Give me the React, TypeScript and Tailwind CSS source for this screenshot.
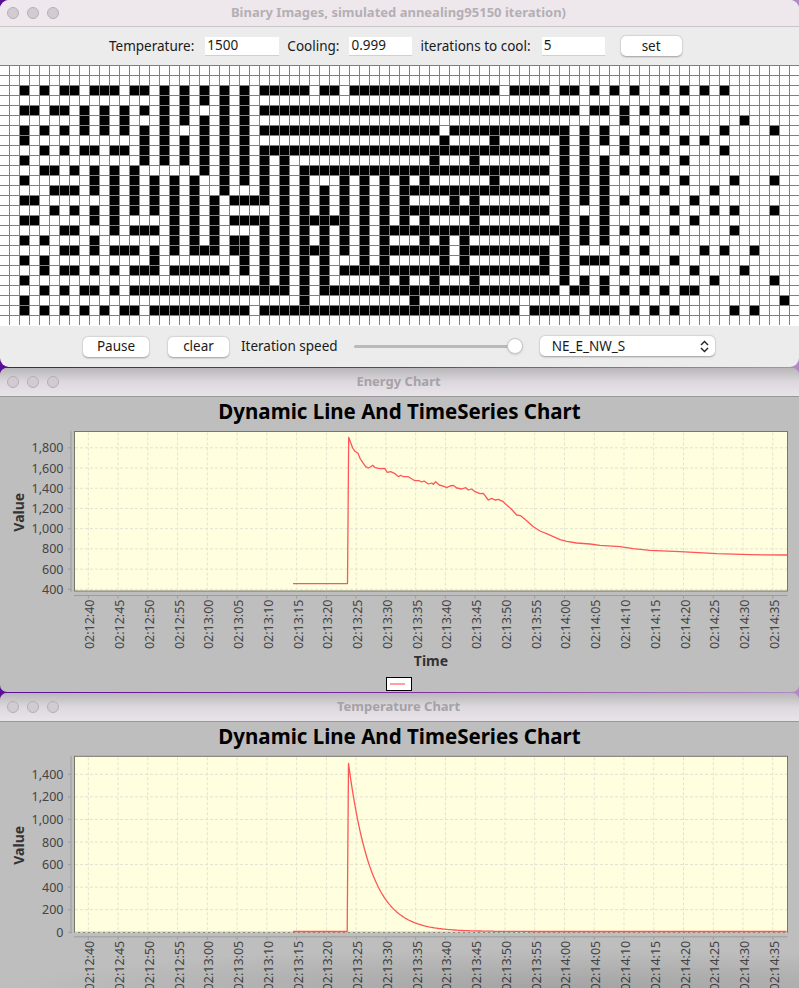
import React from 'react';

const SANS = "font-['Noto_Sans','Open_Sans',sans-serif]";

// black cells per row of the board, as [from, to] column runs or single columns
const BOARD: Record<number, (number | [number, number])[]> = {
  2: [2, 4, [6, 7], [9, 11], [13, 14], 16, 18, 20, 22, 24, [26, 30], [32, 33], [35, 49], [51, 54], [56, 57], 59, 61, 63, 66, 68, 70, 72],
  3: [16, 18, 20, 22, 24],
  4: [[2, 3], [5, 6], 8, 10, 12, 14, 16, 18, 22, 24, [26, 57], [59, 60], 62, 64, 66, 68],
  5: [8, 10, 12, 16, 18, 20, 22, 24, 62, 74],
  6: [2, 4, 6, 8, 10, 12, 14, 16, 20, 22, 24, [26, 43], [45, 56], 58, 60, 64, 66, 72, 77],
  7: [2, 14, 16, 18, 20, 22, 24, 44, 49, 56, 58, 60, 62, 68, 70],
  8: [4, 6, [8, 9], [11, 12], 14, 16, 18, 20, 22, 24, [26, 54], 56, 58, 62, 64, 66, 72],
  9: [2, 14, 16, 18, 20, 22, 24, 26, 28, 43, 47, 56, 58, 60, 68],
  10: [[4, 5], 7, 9, 11, 13, 20, 22, 24, 26, 28, [30, 54], 56, 58, 60, 62, 64, 66],
  11: [2, 9, 11, 13, 15, 17, 19, 22, 24, 26, 28, 30, 34, 36, 38, 40, 42, 49, 56, 58, 60, 68, 73, 77],
  12: [[5, 7], 9, 11, 13, 15, 17, 19, 22, 26, 28, 30, 32, 34, 36, 38, [40, 54], 56, 58, 60, 64, 66, 71],
  13: [[2, 3], 11, 13, 15, 17, 19, 21, [23, 26], 28, 30, 32, 34, 36, 38, 40, 45, 47, 56, 58, 60, 62, 69],
  14: [5, 7, 9, 11, 13, 15, 17, 19, 21, 28, 30, 32, 34, 36, 38, [40, 54], 56, 60, 64, 67, 71, 73, 77],
  15: [[2, 3], 9, 11, 17, 19, 21, [23, 26], 28, [30, 34], 36, 38, 40, 42, 47, 56, 58, 60, 69],
  16: [[6, 7], 11, [13, 15], 17, 19, 21, 26, 28, 30, 32, 34, 36, [38, 56], 58, 60, 62, 64, 67, 73],
  17: [2, 4, 9, 17, 19, 21, [23, 24], 26, 28, 30, 32, 34, 36, 38, 42, 44, 46, 56, 58, 60],
  18: [[6, 7], 9, [11, 13], 15, 17, [19, 21], [23, 24], 26, 28, [30, 32], 34, 36, [38, 44], [46, 54], 56, 62, 64, 70, 72, 75],
  19: [2, 4, 15, 24, 26, 28, 30, 32, 36, 38, 44, 46, 54, 56, [58, 60], 67],
  20: [4, [6, 7], 9, 11, [13, 15], [17, 22], 24, 26, 28, 30, 32, [34, 54], 56, 62, [64, 65], 69, 74],
  21: [2, 26, 28, 30, 32, 38, 40, 43, 47, 56, 58, 60, 71, 77],
  22: [4, 6, [8, 9], 11, [13, 28], 30, [32, 55], [57, 58], 60, 62, 64, 66, [68, 69]],
  23: [2, 30, 41, 78],
  24: [2, 4, 6, 8, 10, [12, 13], [15, 24], [26, 51], [53, 57], [59, 61], 63, 65, 67, 73, 75],
};

const isBlack = (r: number, c: number) =>
  (BOARD[r] || []).some((e) => (Array.isArray(e) ? c >= e[0] && c <= e[1] : c === e));

const Board: React.FC = () => (
  <div className="h-[261px] overflow-hidden bg-white">
    <div className="grid -ml-px w-[801px] grid-cols-[repeat(80,10px)] auto-rows-[10px]">
      {Array.from({ length: 2080 }, (_, i) => {
        const r = Math.floor(i / 80);
        const c = i % 80;
        return (
          <div
            key={i}
            className={isBlack(r, c) ? 'bg-black border-t border-l border-[#808080]' : 'bg-white border-t border-l border-[#808080]'}
          />
        );
      })}
    </div>
  </div>
);

const TitleBar: React.FC<{ title: string; active?: boolean }> = ({ title, active }) => (
  <div
    className={
      active
        ? 'flex h-[27px] items-center border-b border-[#c9c6c9] bg-[#eee8ed] pl-[7px]'
        : 'flex h-[29px] items-center border-b border-[#9a989a] bg-gradient-to-b from-[#b9b7b9] via-[#dcd8dd] to-[#e8e4ea] pl-[7px]'
    }
  >
    <div className="flex gap-[8px]">
      <span className="h-3 w-3 rounded-full border border-[#b5afb5] bg-[#d2ccd2]" />
      <span className="h-3 w-3 rounded-full border border-[#b5afb5] bg-[#d2ccd2]" />
      <span className="h-3 w-3 rounded-full border border-[#b5afb5] bg-[#d2ccd2]" />
    </div>
    <div className={`flex-1 pr-[61px] text-center text-[13px] font-bold ${active ? 'text-[#b4afb4]' : 'text-[#a5a2a6]'} ${SANS}`}>
      {title}
    </div>
  </div>
);

const MacButton: React.FC<{ label: string; className: string }> = ({ label, className }) => (
  <button className={`flex h-5 items-center justify-center rounded-[5px] bg-white text-[13.5px] text-[#1a1a1a] shadow-[0_0.5px_2px_rgba(0,0,0,0.35)] ${className}`}>
    {label}
  </button>
);

const Field: React.FC<{ value: string; className: string }> = ({ value, className }) => (
  <div className={`flex h-[19px] items-center border-b border-[#d0d0d0] bg-white pl-[2px] text-[13.5px] text-[#1a1a1a] ${className}`}>
    {value}
  </div>
);

const TICK_LABELS = Array.from({ length: 24 }, (_, i) => {
  const total = 12 * 60 + 40 + i * 5;
  const m = String(Math.floor(total / 60)).padStart(2, '0');
  const s = String(total % 60).padStart(2, '0');
  return `02:${m}:${s}`;
});

const PLOT = { left: 74.5, right: 787.5 };
const tickX = (i: number) => 88.3 + i * 29.76;

// energy trace, read off the reference crop at 3x
const ENERGY_RAW: [number, number][] = [
  [146, 52], [152, 68], [158, 84], [165, 94], [174, 100], [180, 115], [188, 127], [197, 140], [205, 144], [212, 140],
  [218, 136], [225, 143], [240, 146], [254, 145], [262, 157], [272, 155], [285, 161], [296, 170], [302, 166], [310, 170],
  [325, 170], [345, 182], [358, 182], [365, 186], [372, 183], [385, 192], [395, 189], [400, 193], [407, 185], [418, 195],
  [432, 199], [440, 203], [450, 198], [460, 196], [470, 204], [485, 207], [497, 203], [505, 210], [515, 207], [525, 215],
  [540, 221], [550, 220], [565, 240], [575, 235], [585, 240], [595, 238], [608, 244], [620, 255], [633, 266], [650, 285],
  [662, 287], [680, 302], [700, 320], [720, 333], [745, 343], [780, 359], [800, 364], [830, 369], [870, 372], [900, 376],
  [960, 380], [1000, 386], [1050, 391], [1140, 395], [1250, 401], [1350, 404], [1462, 405],
];
const energyPoints =
  '293,156.6 347.5,156.6 ' + ENERGY_RAW.map(([x, y]) => `${(300 + x / 3).toFixed(1)},${(420 + y / 3 - 427).toFixed(1)}`).join(' ');

const tempPoints = (bottom: number) => {
  const base = bottom - 0.8;
  const pts = [`293,${base}`, `347.2,${base}`];
  for (let x = 348.5; x <= 787; x += 2) {
    const t = 1490 * Math.exp(-(x - 348.5) / 22.4);
    pts.push(`${x},${(base - t * 0.1128).toFixed(1)}`);
  }
  return pts.join(' ');
};

interface ChartProps {
  height: number;
  plotTop: number;
  plotBottom: number;
  ticks: { label: string; y: number }[];
  points: string;
  showFooter?: boolean;
}

const Chart: React.FC<ChartProps> = ({ height, plotTop, plotBottom, ticks, points, showFooter }) => (
  <svg width={799} height={height} className="block" fontFamily="'Noto Sans', sans-serif">
    <line x1={71} x2={71} y1={plotTop} y2={plotBottom + 1} stroke="#9c9c9c" />
    <line x1={74} x2={PLOT.right} y1={plotBottom + 4.5} y2={plotBottom + 4.5} stroke="#9c9c9c" />
    <rect x={PLOT.left} y={plotTop} width={PLOT.right - PLOT.left} height={plotBottom - plotTop} fill="#ffffe0" stroke="#77776a" />
    {ticks.map((t) => (
      <g key={t.label}>
        <line x1={75} x2={787} y1={t.y} y2={t.y} stroke="#e2e2d0" strokeDasharray="3 2" />
        <line x1={68} x2={71} y1={t.y} y2={t.y} stroke="#9c9c9c" />
        <text x={63.5} y={t.y + 4.5} textAnchor="end" fontSize={12.5} fill="#444444">
          {t.label}
        </text>
      </g>
    ))}
    {TICK_LABELS.map((l, i) => (
      <g key={l}>
        <line x1={tickX(i)} x2={tickX(i)} y1={plotTop + 1} y2={plotBottom} stroke="#e2e2d0" strokeDasharray="3 2" />
        <line x1={tickX(i)} x2={tickX(i)} y1={plotBottom + 4.5} y2={plotBottom + 7.5} stroke="#9c9c9c" />
        <text
          transform={`translate(${tickX(i) + 6} ${plotBottom + 8.5}) rotate(-90)`}
          textAnchor="end"
          fontSize={12.5}
          fill="#444444"
        >
          {l}
        </text>
      </g>
    ))}
    <polyline points={points} fill="none" stroke="#ff5555" strokeWidth={1.3} strokeLinejoin="round" />
    <text
      transform={`translate(24 ${(plotTop + plotBottom) / 2 + 1}) rotate(-90)`}
      textAnchor="middle"
      fontSize={14}
      fontWeight={700}
      fill="#333333"
    >
      Value
    </text>
    {showFooter && (
      <>
        <text x={431} y={plotBottom + 75} textAnchor="middle" fontSize={14} fontWeight={700} fill="#333333">
          Time
        </text>
        <rect x={386.5} y={plotBottom + 86.5} width={25} height={13} fill="#ffffff" stroke="#000000" />
        <line x1={390} x2={405} y1={plotBottom + 93} y2={plotBottom + 93} stroke="#ffa0a0" strokeWidth={2} />
      </>
    )}
  </svg>
);

const ChartTitle: React.FC = () => (
  <div className={`h-[30px] pt-[1px] text-center text-[20.5px] font-bold leading-[26px] text-black ${SANS}`}>
    Dynamic Line And TimeSeries Chart
  </div>
);

const ENERGY_TICKS = ['1,800', '1,600', '1,400', '1,200', '1,000', '800', '600', '400'].map((label, i) => ({
  label,
  y: 447.8 + i * 20.22 - 427,
}));
const TEMP_TICKS = ['1,400', '1,200', '1,000', '800', '600', '400', '200', '0'].map((label, i) => ({
  label,
  y: 774.3 + i * 22.57 - 752,
}));

export default function App() {
  return (
    <div className="h-[988px] w-[799px] overflow-hidden bg-gradient-to-r from-[#5a0d96] via-[#7f2aa0] to-[#b08cc0]">
      <div className={`flex h-[367px] flex-col overflow-hidden rounded-[9px] bg-[#ececec] text-[13.5px] ${SANS}`}>
        <TitleBar title="Binary Images, simulated annealing95150 iteration)" active />
        <div className="flex h-[38px] items-center pl-[109px] text-[#1a1a1a]">
          <span>Temperature:</span>
          <Field value="1500" className="ml-[11px] w-[74px]" />
          <span className="ml-[8px]">Cooling:</span>
          <Field value="0.999" className="ml-[10px] w-[63px]" />
          <span className="ml-[8px]">iterations to cool:</span>
          <Field value="5" className="ml-[11px] w-[63px]" />
          <MacButton label="set" className="ml-[16px] w-[61px]" />
        </div>
        <Board />
        <div className="flex flex-1 items-center pl-[83px] text-[#1a1a1a]">
          <MacButton label="Pause" className="w-[66px]" />
          <MacButton label="clear" className="ml-[19px] w-[61px]" />
          <span className="ml-[12px]">Iteration speed</span>
          <div className="relative ml-[16px] h-[3px] w-[161px] rounded bg-[#b9b9b9]">
            <span className="absolute -right-[8px] -top-[7px] h-4 w-4 rounded-full border border-[#c4c4c4] bg-white shadow-sm" />
          </div>
          <div className="-mt-px ml-[25px] flex h-5 w-[175px] items-center justify-between rounded-[5px] bg-white pl-3 pr-[6px] shadow-[0_0.5px_2px_rgba(0,0,0,0.35)]">
            <span>NE_E_NW_S</span>
            <svg width="9" height="13" viewBox="0 0 9 13" fill="none" stroke="#222" strokeWidth="1.4">
              <path d="M1 5l3.5-3.5L8 5M1 8l3.5 3.5L8 8" />
            </svg>
          </div>
        </div>
      </div>

      <div className="h-px" />
      <div className="h-[324px] overflow-hidden rounded-[7px] bg-[#bebebe]">
        <TitleBar title="Energy Chart" />
        <ChartTitle />
        <Chart height={265} plotTop={4.5} plotBottom={164} ticks={ENERGY_TICKS} points={energyPoints} showFooter />
      </div>
      <div className="h-px" />
      <div className="relative h-[295px] overflow-hidden rounded-t-[7px] bg-[#bebebe]">
        <TitleBar title="Temperature Chart" />
        <ChartTitle />
        <Chart height={236} plotTop={4.3} plotBottom={180.3} ticks={TEMP_TICKS} points={tempPoints(180.3)} />
        <div className="pointer-events-none absolute bottom-0 left-0 right-0 h-10 bg-[radial-gradient(ellipse_at_70%_100%,rgba(0,0,0,0.14),transparent_70%)]" />
      </div>
    </div>
  );
}
